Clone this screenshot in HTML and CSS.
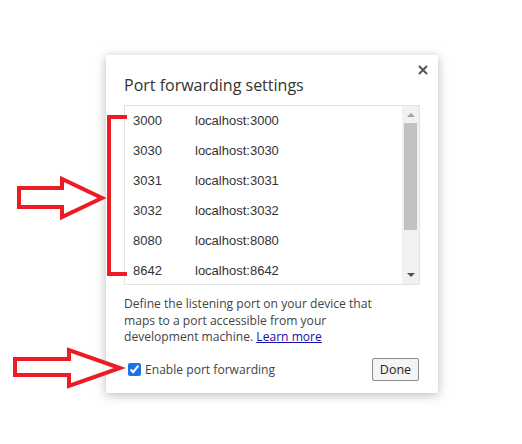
FILE: index.html
```html
<!DOCTYPE html>
<html>
<head>
<meta charset="utf-8">
<link rel="stylesheet" href="styles.css">
</head>
<body>
<div class="page">
  <div class="dialog">
    <button class="close" aria-label="Close">
      <svg width="10" height="10" viewBox="0 0 10 10"><path d="M1 1L9 9M9 1L1 9" stroke="#555" stroke-width="2"/></svg>
    </button>
    <h1 class="title">Port forwarding settings</h1>
    <div class="list">
      <div class="rows">
        <div class="row"><span class="port">3000</span><span class="addr">localhost:3000</span></div>
        <div class="row"><span class="port">3030</span><span class="addr">localhost:3030</span></div>
        <div class="row"><span class="port">3031</span><span class="addr">localhost:3031</span></div>
        <div class="row"><span class="port">3032</span><span class="addr">localhost:3032</span></div>
        <div class="row"><span class="port">8080</span><span class="addr">localhost:8080</span></div>
        <div class="row"><span class="port">8642</span><span class="addr">localhost:8642</span></div>
      </div>
      <div class="scrollbar">
        <div class="arrow up"></div>
        <div class="track"><div class="thumb"></div></div>
        <div class="arrow down"></div>
      </div>
    </div>
    <p class="desc">Define the listening port on your device that maps to a port accessible from your development machine. <a href="#" class="link">Learn more</a></p>
    <div class="footer">
      <label class="check"><input type="checkbox" checked><span>Enable port forwarding</span></label>
      <button class="done">Done</button>
    </div>
  </div>
  <svg class="marks" width="522" height="444" viewBox="0 0 522 444">
    <polyline points="127,117 109,117 109,274 127,274" fill="none" stroke="#ed1c24" stroke-width="4"/>
    <polygon points="19,188 62,188 62,179 102,198 62,217 62,207 19,207" fill="#fff" stroke="#ed1c24" stroke-width="4" stroke-linejoin="miter"/>
    <polygon points="15,359 69,359 69,350 120,368 69,386 69,375 15,375" fill="#fff" stroke="#ed1c24" stroke-width="4" stroke-linejoin="miter"/>
  </svg>
</div>
</body>
</html>
```
FILE: styles.css
```css
* { box-sizing: border-box; }
html, body { margin: 0; padding: 0; background: #fff; }
.page {
  position: relative;
  width: 522px;
  height: 444px;
  padding: 55px 0 0 106px;
  overflow: hidden;
}
.dialog {
  position: relative;
  width: 332px;
  height: 338px;
  background: #fff;
  box-shadow: 0 2px 10px rgba(0,0,0,0.28);
  padding: 0 18px 12px 18px;
  display: flex;
  flex-direction: column;
  font-family: "Open Sans", "Noto Sans", sans-serif;
  color: #333;
}
.close {
  position: absolute;
  right: 10px;
  top: 10px;
  width: 10px;
  height: 10px;
  padding: 0;
  border: 0;
  background: none;
  display: flex;
}
.title {
  margin: 0;
  padding: 19px 0 0 0;
  height: 50px;
  font-size: 16px;
  font-weight: 400;
  line-height: 22px;
  color: #333;
}
.list {
  height: 180px;
  border: 1px solid #e4e4e4;
  display: flex;
  font-family: "Liberation Sans", Arial, sans-serif;
  font-size: 13px;
  color: #333;
}
.rows {
  flex: 1;
  display: flex;
  flex-direction: column;
  padding-left: 8px;
}
.row {
  height: 30px;
  flex: none;
  display: flex;
  align-items: center;
}
.row:first-child { height: 29px; }
.port { width: 62px; }
.scrollbar {
  width: 17px;
  background: #f1f1f1;
  display: flex;
  flex-direction: column;
  align-items: center;
}
.arrow {
  width: 0;
  height: 0;
  border-left: 4px solid transparent;
  border-right: 4px solid transparent;
}
.arrow.up {
  margin: 7px 0 5px;
  border-bottom: 4px solid #a3a3a3;
}
.arrow.down {
  margin: 5px 0 7px;
  border-top: 4px solid #505050;
}
.track {
  flex: 1;
  width: 100%;
  padding: 1px 2px 0 2px;
}
.thumb {
  height: 107px;
  background: #c1c1c1;
}
.desc {
  width: 262px;
  margin: 11px 0 0 0;
  font-size: 12.1px;
  line-height: 16.5px;
  color: #444;
}
.link { color: #1a0dab; text-decoration: underline; }
.footer {
  margin-top: auto;
  display: flex;
  align-items: center;
  justify-content: space-between;
}
.check {
  display: flex;
  align-items: center;
  font-size: 12.1px;
  color: #444;
}
.check input {
  width: 13px;
  height: 13px;
  margin: 0 4px 0 4px;
  accent-color: #1a73e8;
}
.done {
  width: 47px;
  height: 23px;
  margin-right: 1px;
  padding: 0;
  border: 1px solid #8b8b8b;
  border-radius: 2px;
  background: #f4f4f4;
  font-family: "Open Sans", "Noto Sans", sans-serif;
  font-size: 12.5px;
  color: #222;
}
.marks {
  position: absolute;
  left: 0;
  top: 0;
  pointer-events: none;
}
```
